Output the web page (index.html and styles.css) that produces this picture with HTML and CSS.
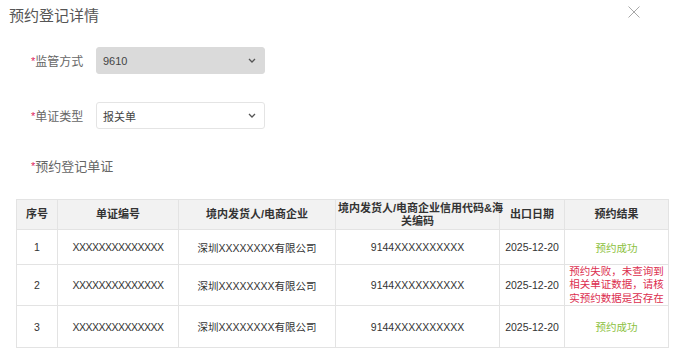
FILE: index.html
```html
<!DOCTYPE html>
<html>
<head>
<meta charset="utf-8">
<title>预约登记详情</title>
<link rel="stylesheet" href="styles.css">
</head>
<body>
  <div class="dialog">
    <div class="dialog-head">
      <div class="dialog-title">预约登记详情</div>
      <svg class="close" width="12" height="12" viewBox="0 0 12 12">
        <path d="M0.5 0.5 L11.5 11.5 M11.5 0.5 L0.5 11.5" stroke="#a8a8a8" stroke-width="1" fill="none"/>
      </svg>
    </div>

    <div class="form">
      <div class="form-row">
        <div class="label"><span class="req">*</span>监管方式</div>
        <div class="select disabled">
          <span>9610</span>
          <svg width="8" height="5" viewBox="0 0 8 5"><path d="M1 1 L4 4 L7 1" stroke="#555" stroke-width="1.3" fill="none"/></svg>
        </div>
      </div>
      <div class="form-row">
        <div class="label"><span class="req">*</span>单证类型</div>
        <div class="select">
          <span>报关单</span>
          <svg width="8" height="5" viewBox="0 0 8 5"><path d="M1 1 L4 4 L7 1" stroke="#555" stroke-width="1.3" fill="none"/></svg>
        </div>
      </div>
      <div class="section-label"><span class="req">*</span>预约登记单证</div>
    </div>

    <table class="grid">
      <colgroup>
        <col style="width:41px">
        <col style="width:121px">
        <col style="width:157px">
        <col style="width:164px">
        <col style="width:65px">
        <col style="width:104px">
      </colgroup>
      <thead>
        <tr>
          <th>序号</th>
          <th>单证编号</th>
          <th>境内发货人/电商企业</th>
          <th class="nowrap">境内发货人/电商企业信用代码&amp;海<br>关编码</th>
          <th>出口日期</th>
          <th>预约结果</th>
        </tr>
      </thead>
      <tbody>
        <tr class="r1">
          <td>1</td>
          <td class="code">XXXXXXXXXXXXXX</td>
          <td>深圳XXXXXXXX有限公司</td>
          <td>9144XXXXXXXXXX</td>
          <td>2025-12-20</td>
          <td class="ok">预约成功</td>
        </tr>
        <tr class="r2">
          <td>2</td>
          <td class="code">XXXXXXXXXXXXXX</td>
          <td>深圳XXXXXXXX有限公司</td>
          <td>9144XXXXXXXXXX</td>
          <td>2025-12-20</td>
          <td class="fail">预约失败，未查询到相关单证数据，请核实预约数据是否存在</td>
        </tr>
        <tr class="r3">
          <td>3</td>
          <td class="code">XXXXXXXXXXXXXX</td>
          <td>深圳XXXXXXXX有限公司</td>
          <td>9144XXXXXXXXXX</td>
          <td>2025-12-20</td>
          <td class="ok">预约成功</td>
        </tr>
      </tbody>
    </table>
  </div>
</body>
</html>
```

FILE: styles.css
```css
body, html {
  margin: 0;
  padding: 0;
  background: #fff;
}

body {
  font-family: "Liberation Sans", "Noto Sans CJK SC", sans-serif;
  color: #333;
}

.dialog-head {
  display: flex;
  justify-content: space-between;
  align-items: center;
  height: 28px;
  padding: 0 35px 0 9px;
}

.dialog-title {
  font-size: 15px;
  color: #555;
}

.close {
  display: block;
  margin-top: -5px;
}

.form {
  padding-left: 31px;
  margin-top: 19px;
}

.form-row {
  display: flex;
  align-items: center;
  height: 27px;
  margin-bottom: 28px;
}

.label {
  width: 65px;
  font-size: 12px;
  color: #666;
}

.req {
  color: #e0245e;
  font-size: 11px;
  vertical-align: 1px;
}

.select {
  box-sizing: border-box;
  width: 169px;
  height: 27px;
  display: flex;
  align-items: center;
  justify-content: space-between;
  padding: 0 8px 0 6px;
  border: 1px solid #e4e4e4;
  border-radius: 3px;
  background: #fff;
  font-size: 11px;
  color: #444;
}

.select.disabled {
  background: #dadada;
  border-color: #dadada;
}

.section-label {
  font-size: 13px;
  line-height: 20px;
  color: #666;
  margin-top: -1px;
}

.grid {
  margin: 22px 0 0 16px;
  width: 652px;
  table-layout: fixed;
  border-collapse: collapse;
}

.grid th, .grid td {
  border: 1px solid #e3e3e3;
  text-align: center;
  padding: 0 2px;
}

.grid th {
  background: #f2f2f2;
  font-size: 11px;
  line-height: 13px;
  height: 29px;
  color: #333;
}

.grid th.nowrap {
  white-space: nowrap;
}

.grid td {
  font-size: 10.5px;
  color: #333;
}

.grid td.code {
  letter-spacing: -0.5px;
}

.grid .r1 td { height: 34px; }
.grid .r2 td { height: 40px; }
.grid .r3 td { height: 41px; }

.grid td.ok {
  color: #8cbf3e;
}

.grid td.fail {
  color: #dc2f4f;
  line-height: 13.3px;
  padding: 0 2px;
}
```
